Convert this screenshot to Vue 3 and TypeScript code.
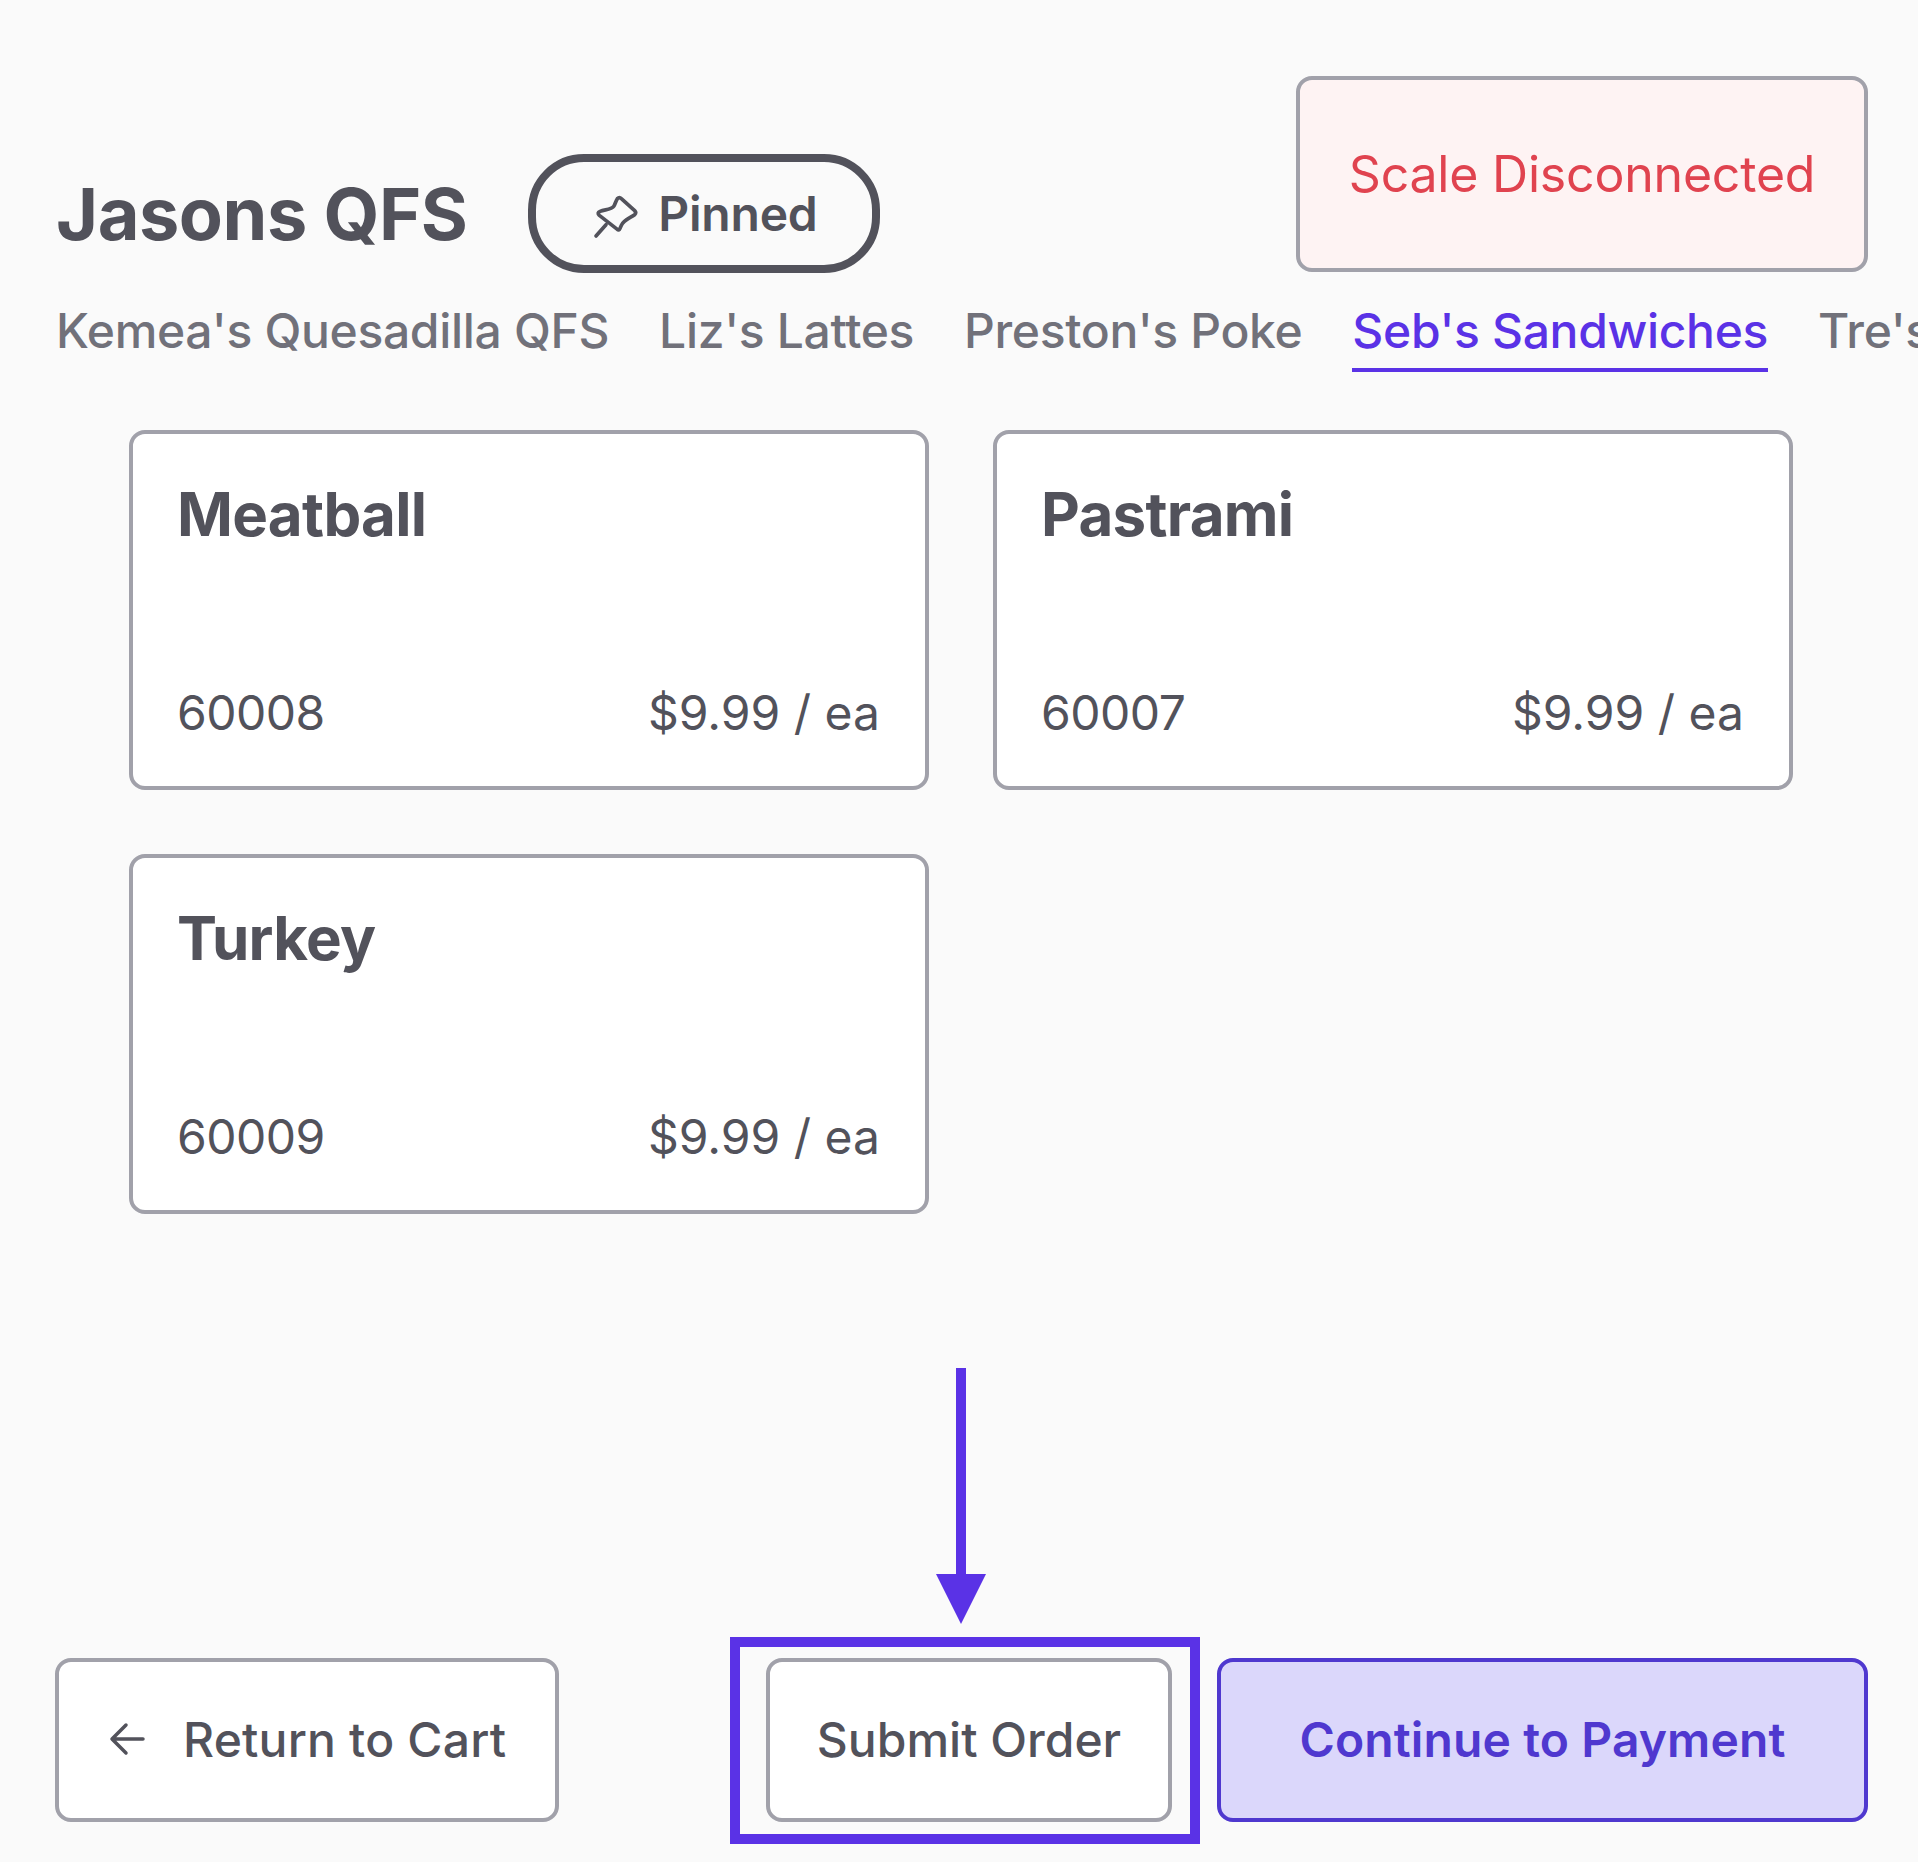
<script setup lang="ts">
type Item = { name: string; code: string; price: string }

const tabs = ["Kemea's Quesadilla QFS", "Liz's Lattes", "Preston's Poke", "Seb's Sandwiches", "Tre's"]
const activeTab = "Seb's Sandwiches"

const items: Item[] = [
  { name: 'Meatball', code: '60008', price: '$9.99 / ea' },
  { name: 'Pastrami', code: '60007', price: '$9.99 / ea' },
  { name: 'Turkey', code: '60009', price: '$9.99 / ea' },
]
</script>

<template>
  <div class="page">
    <header class="top">
      <div class="vendor">
        <h1 class="vendor-name">Jasons QFS</h1>
        <button class="pin-btn" type="button">
          <svg class="pin-icon" viewBox="0 0 180 180" fill="none" stroke="currentColor" stroke-width="11" stroke-linecap="round" stroke-linejoin="round">
            <path d="M100 44Q106 38 112 44L152 80Q158 86 152 92C138 102 118 108 112 124C108 134 106 142 100 136L46 94Q38 86 48 82C64 76 82 78 90 66C94 58 96 50 100 44Z" />
            <path d="M66 122 36 156" />
          </svg>
          <span>Pinned</span>
        </button>
      </div>
      <div class="scale-alert">Scale Disconnected</div>
    </header>

    <nav class="tabs">
      <a v-for="tab in tabs" :key="tab" class="tab" :class="{ active: tab === activeTab }">{{ tab }}</a>
    </nav>

    <section class="grid">
      <article v-for="item in items" :key="item.code" class="card">
        <h2 class="card-name">{{ item.name }}</h2>
        <div class="card-meta">
          <span class="card-code">{{ item.code }}</span>
          <span>{{ item.price }}</span>
        </div>
      </article>
    </section>

    <footer class="actions">
      <button class="btn back" type="button">
        <svg class="back-icon" viewBox="0 0 40 40" fill="none" stroke="currentColor" stroke-width="3.5" stroke-linecap="round" stroke-linejoin="round">
          <path d="M36 20H6M19 6 5 20l14 14" />
        </svg>
        <span>Return to Cart</span>
      </button>
      <div class="actions-right">
        <div class="submit-wrap">
          <button class="btn submit" type="button">Submit Order</button>
          <!-- annotation drawn on top of the screenshot -->
          <div class="mark-box"></div>
          <svg class="mark-arrow" viewBox="0 0 50 256" fill="#5a32e6">
            <rect x="20" y="0" width="10" height="208" />
            <path d="M0 206h50l-25 50Z" />
          </svg>
        </div>
        <button class="btn primary" type="button">Continue to Payment</button>
      </div>
    </footer>
  </div>
</template>

<style scoped>
.page {
  box-sizing: border-box;
  width: 1918px;
  height: 1862px;
  padding: 76px 50px 40px 56px;
  display: flex;
  flex-direction: column;
  overflow: hidden;
  background: #fafafa;
  color: #52525b;
  font-family: Inter, "Liberation Sans", sans-serif;
}

.top {
  display: flex;
  align-items: flex-end;
  justify-content: space-between;
}

.vendor {
  display: flex;
  align-items: center;
  gap: 61px;
  margin-bottom: -1px;
}

.vendor-name {
  margin: 0;
  font-size: 72px;
  line-height: 80px;
  font-weight: 650;
  letter-spacing: -0.45px;
}

.pin-btn {
  box-sizing: border-box;
  width: 352px;
  height: 119px;
  padding: 0 3px 0 0;
  display: flex;
  align-items: center;
  justify-content: center;
  gap: 14px;
  border: 8px solid #52525b;
  border-radius: 56px;
  background: transparent;
  color: inherit;
  font: inherit;
  font-size: 48px;
  font-weight: 600;
  letter-spacing: -0.2px;
}

.pin-icon {
  width: 60px;
  height: 60px;
  margin-left: -4px;
}

.scale-alert {
  box-sizing: border-box;
  width: 572px;
  height: 196px;
  display: flex;
  align-items: center;
  justify-content: center;
  border: 4px solid #a1a1aa;
  border-radius: 16px;
  background: #fef3f3;
  color: #e0434f;
  font-size: 50px;
  letter-spacing: -0.2px;
}

.tabs {
  margin-top: 27px;
  margin-right: -50px;
  display: flex;
  gap: 50px;
  overflow: hidden;
  font-size: 48px;
  font-weight: 500;
  letter-spacing: -0.33px;
  color: #71717a;
}

.tab {
  flex: none;
  padding-bottom: 5px;
  line-height: 64px;
  border-bottom: 4px solid transparent;
}

.tab.active {
  color: #5a32e6;
  border-bottom-color: #5a32e6;
}

.grid {
  margin-top: 58px;
  padding: 0 75px 0 73px;
  display: grid;
  grid-template-columns: repeat(2, 1fr);
  gap: 64px;
}

.card {
  box-sizing: border-box;
  height: 360px;
  padding: 44px 45px 41px 44px;
  display: flex;
  flex-direction: column;
  justify-content: space-between;
  border: 4px solid #a1a1aa;
  border-radius: 16px;
  background: #fff;
}

.card-name {
  margin: 0;
  font-size: 60px;
  line-height: 72px;
  font-weight: 650;
  letter-spacing: -0.7px;
}

.card-meta {
  display: flex;
  justify-content: space-between;
  font-size: 48px;
  line-height: 64px;
}

.card-code {
  letter-spacing: -0.5px;
}

.actions {
  margin-top: auto;
  margin-left: -1px;
  display: flex;
  justify-content: space-between;
}

.actions-right {
  display: flex;
  gap: 45px;
}

.submit-wrap {
  position: relative;
}

.btn {
  box-sizing: border-box;
  height: 164px;
  padding: 0 48px 2px;
  display: flex;
  align-items: center;
  border: 4px solid #a1a1aa;
  border-radius: 16px;
  background: #fff;
  color: #52525b;
  font: inherit;
  font-size: 48px;
  font-weight: 500;
  white-space: nowrap;
}

.btn.back {
  width: 504px;
  gap: 36px;
  letter-spacing: 0.2px;
}

.btn.submit {
  width: 406px;
  padding-left: 0;
  padding-right: 0;
  justify-content: center;
}

.btn.primary {
  width: 651px;
  justify-content: center;
  border-color: #4f38cf;
  background: #dbd7fb;
  color: #4f38cf;
  font-weight: 600;
  letter-spacing: 0.1px;
}

.back-icon {
  width: 40px;
  height: 40px;
}

.mark-box {
  position: absolute;
  left: -36px;
  top: -21px;
  width: 470px;
  height: 207px;
  box-sizing: border-box;
  border: 10px solid #5a32e6;
  pointer-events: none;
}

.mark-arrow {
  position: absolute;
  left: 170px;
  top: -290px;
  width: 50px;
  height: 256px;
}
</style>

<style>
html,
body {
  margin: 0;
  overflow: hidden;
}
</style>
